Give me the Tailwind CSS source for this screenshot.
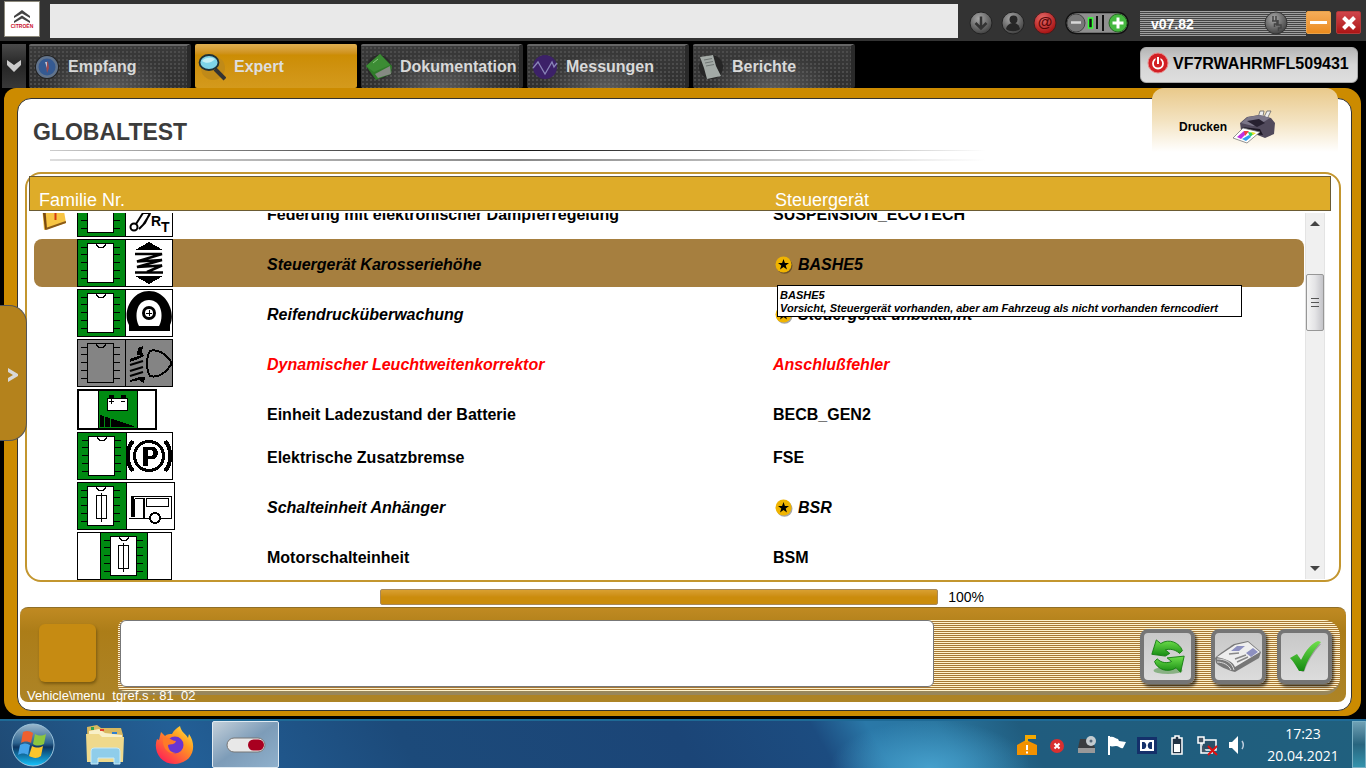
<!DOCTYPE html>
<html lang="de">
<head>
  <meta charset="UTF-8" />
  <meta name="viewport" content="width=device-width, initial-scale=1.0"/>
  <title>Globaltest</title>
  <script src="https://cdn.jsdelivr.net/npm/@tailwindcss/browser@4"></script>
</head>
<body class="h-screen min-h-[640px] flex flex-col bg-black font-['Liberation_Sans',Arial,sans-serif] text-black overflow-hidden">

  <!-- Shared drawings -->
  <svg class="absolute w-0 h-0" aria-hidden="true">
    <symbol id="chip" viewBox="0 0 48 48">
      <path d="M4 8.500H11M4 15.500H11M4 23.500H11M4 31.500H11M4 39.500H11M37 8.500H43M37 15.500H43M37 23.500H43M37 31.500H43M37 39.500H43" stroke="#000" fill="none"/>
      <rect x="10.500" y="4.500" width="26" height="39" stroke="#000"/>
      <path d="M19.500 4.500C19.500 10 28.500 10 28.500 4.500" fill="none" stroke="#000"/>
    </symbol>
    <symbol id="fuse" viewBox="0 0 48 48">
      <path d="M19.500 13.500H29.500V36.500H19.500ZM24.500 11V40" fill="none" stroke="#000"/>
    </symbol>
    <symbol id="star" viewBox="0 0 18 18">
      <circle cx="9.500" cy="9.800" r="8" fill="#000" opacity=".35"/>
      <circle cx="8.500" cy="8.500" r="8" fill="#f0b400"/>
      <path d="M8.500 3 9.900 7H14L10.700 9.400 12 13.400 8.500 11 5 13.400 6.300 9.400 3 7H7.100Z" fill="#000"/>
    </symbol>
    <radialGradient id="knob" cx=".4" cy=".3" r=".7"><stop offset="0" stop-color="#a8a8a8"/><stop offset="1" stop-color="#444"/></radialGradient>
    <radialGradient id="redKnob" cx=".4" cy=".3" r=".7"><stop offset="0" stop-color="#e86a6a"/><stop offset="1" stop-color="#a51010"/></radialGradient>
    <linearGradient id="leaf" x1="0" y1="0" x2="0" y2="1"><stop offset="0" stop-color="#6fe04c"/><stop offset="1" stop-color="#158a12"/></linearGradient>
  </svg>

  <!-- Top bar -->
  <header class="h-[41px] shrink-0 bg-[#333] flex items-center pl-1 pr-[5px]">
    <svg class="w-9 h-9 shrink-0 -mt-1" viewBox="0 0 36 36">
      <rect x=".5" y=".5" width="35" height="35" fill="#fff" stroke="#8d8a7c"/>
      <path d="M10 15 18 9 26 15V17L18 12.500 10 17ZM10 20 18 14.500 26 20V22L18 17.500 10 22Z" fill="#444"/>
      <text x="18" y="27" font-size="5" font-weight="bold" fill="#c8102e" text-anchor="middle">CITROËN</text>
    </svg>
    <input type="text" aria-label="Meldung" class="ml-[10px] h-[34px] flex-1 min-w-0 bg-[#e9e9e9] outline-none px-2" />
    <div class="flex items-center ml-[11px] pt-1 gap-2">
      <button type="button" aria-label="Download"><svg class="w-6 h-6" viewBox="0 0 24 24"><circle cx="12" cy="12" r="11" fill="url(#knob)" stroke="#222"/><path d="M12 5.500V17M6.500 12 12 17.500 17.500 12" stroke="#333" stroke-width="2.500" fill="none"/></svg></button>
      <button type="button" aria-label="Benutzer"><svg class="w-6 h-6" viewBox="0 0 24 24"><circle cx="12" cy="12" r="11" fill="url(#knob)" stroke="#222"/><circle cx="12.500" cy="8.500" r="4" fill="#262626"/><path d="M5 18C6 13 10 12 12.500 12S18 13 19 18C16 21 8 21 5 18Z" fill="#262626"/></svg></button>
      <button type="button" aria-label="E-Mail"><svg class="w-6 h-6" viewBox="0 0 24 24"><circle cx="12" cy="12" r="11" fill="url(#redKnob)" stroke="#3a2020"/><text x="12" y="16" font-size="15" text-anchor="middle" fill="#5a0707" font-weight="bold">@</text></svg></button>
      <button type="button" aria-label="Zoom"><svg class="w-16 h-6" viewBox="0 0 64 24">
        <rect x="1" y="1.500" width="62" height="21" rx="10.500" fill="#8f8f8f" stroke="#111" stroke-width="1.500"/>
        <circle cx="11" cy="12" r="9" fill="#777" stroke="#444"/><path d="M6 11.500H16" stroke="#d8d8d8" stroke-width="2.500"/>
        <rect x="23.500" y="7" width="4" height="10" fill="#111" stroke="#3f3" stroke-width="1.500"/>
        <path d="M32 5V18M38 4V20" stroke="#111" stroke-width="2"/>
        <circle cx="53" cy="12" r="9" fill="#45b83f" stroke="#2a6e26"/><path d="M53 6.500V17.500M47.500 12H58.500" stroke="#fff" stroke-width="3"/>
      </svg></button>
    </div>
    <div class="ml-[11px] mt-[5px] h-[25px] w-[166px] flex items-center justify-between pl-[11px] pr-[18px] bg-[repeating-linear-gradient(#a0a0a0_0_1px,#444_1px_2px)] text-white text-[14px] font-bold">
      <span class="pt-[2px]">v07.82</span>
      <svg class="w-6 h-6" viewBox="0 0 24 24"><circle cx="12" cy="12" r="11" fill="url(#knob)" stroke="#333"/><path d="M9 5V10M12 5V10M8 10H13V13H10.500V16M14 9V14M12 14H17V17H14.500V20" stroke="#444" stroke-width="1.500" fill="none"/></svg>
    </div>
    <button type="button" aria-label="Minimieren" class="mt-1 w-[25px] h-[23px] rounded-xs border border-[#e9a24a] bg-linear-to-b from-[#f4ac58] to-[#ec8c1c] flex items-center justify-center"><span class="w-[17px] h-[3px] bg-white"></span></button>
    <button type="button" aria-label="Schließen" class="mt-1 ml-[5px] w-[25px] h-[23px] rounded-xs border border-[#b03a3a] bg-linear-to-b from-[#d0444a] to-[#ad1414] flex items-center justify-center">
      <svg class="w-4 h-4" viewBox="0 0 16 16"><path d="M2.500 2.500 13.500 13.500M13.500 2.500 2.500 13.500" stroke="#fff" stroke-width="4"/></svg>
    </button>
  </header>

  <!-- Tabs -->
  <nav class="h-[47px] shrink-0 flex items-end pl-[2px] pr-2">
    <button type="button" aria-label="Menü" class="w-6 h-[44px] bg-linear-to-b from-[#4a4a4a] via-[#262626] to-[#383838] flex items-center justify-center">
      <svg class="w-4 h-4" viewBox="0 0 16 16"><path d="M1 2 8 7 15 2V7L8 14 1 7Z" fill="#ccc"/></svg>
    </button>
    <div class="flex items-end gap-1 ml-[3px]">
      <a href="#" class="w-[162px] h-[44px] flex items-center gap-2 pl-[5px] border-t-2 border-t-[#666] border-r-4 border-r-[#2a2a2a] rounded-xs bg-[radial-gradient(ellipse_at_50%_110%,#8888_0,#3330_60%),radial-gradient(#4c4c4c_25%,#3330_27%),linear-gradient(#3a3a3a,#303030)] bg-[size:100%_100%,4px_4px,100%_100%] text-[#d9d9d9] font-bold text-base">
        <svg class="w-[26px] h-[26px] shrink-0" viewBox="0 0 26 26"><circle cx="13" cy="13" r="12" fill="#222"/><circle cx="13" cy="13" r="11" fill="#62748c"/><circle cx="13" cy="13" r="8.500" fill="#355a92"/><path d="M11.500 8 14 7.500 15 14 13 19Z" fill="#9c4a50"/><path d="M11 8 13 8 13 14Z" fill="#b9c4d8"/></svg>
        Empfang
      </a>
      <a href="#" aria-current="page" class="w-[162px] h-[44px] flex items-center gap-2 pl-[3px] pt-[2px] rounded-xs bg-linear-to-b from-[#e0b050] via-[#cc8d04] via-25% to-[#d49a1c] text-[#dedede] font-bold text-base">
        <svg class="w-7 h-7 shrink-0" viewBox="0 0 28 28"><circle cx="15" cy="15" r="12" fill="#c08a18"/><path d="M17 16 27 26" stroke="#333" stroke-width="4"/><ellipse cx="11" cy="9.500" rx="9.500" ry="7.500" fill="#7fd4e8" stroke="#1f3138" stroke-width="1.800"/><path d="M4 8C7 4 13 4 17 6 14 10 8 11 4 8Z" fill="#c6f0f5"/></svg>
        Expert
      </a>
      <a href="#" class="w-[162px] h-[44px] flex items-center gap-2 pl-[5px] border-t-2 border-t-[#666] border-r-4 border-r-[#2a2a2a] rounded-xs bg-[radial-gradient(ellipse_at_50%_110%,#8888_0,#3330_60%),radial-gradient(#4c4c4c_25%,#3330_27%),linear-gradient(#3a3a3a,#303030)] bg-[size:100%_100%,4px_4px,100%_100%] text-[#d9d9d9] font-bold text-base">
        <svg class="w-[26px] h-[26px] shrink-0" viewBox="0 0 26 26"><circle cx="13" cy="13" r="12" fill="#2a2a2a"/><path d="M0 12 14 0 26 12 25 20 10 26Z" fill="#2f7a2a"/><path d="M9 20 24 12 25 20 12 24Z" fill="#858a82"/><path d="M0 12 14 0 24 11 8 18Z" fill="#3c8c34"/><path d="M7 9 12 5" stroke="#8ac880"/></svg>
        Dokumentation
      </a>
      <a href="#" class="w-[162px] h-[44px] flex items-center gap-2 pl-[5px] border-t-2 border-t-[#666] border-r-4 border-r-[#2a2a2a] rounded-xs bg-[radial-gradient(ellipse_at_50%_110%,#8888_0,#3330_60%),radial-gradient(#4c4c4c_25%,#3330_27%),linear-gradient(#3a3a3a,#303030)] bg-[size:100%_100%,4px_4px,100%_100%] text-[#d9d9d9] font-bold text-base">
        <svg class="w-[26px] h-[26px] shrink-0" viewBox="0 0 26 26"><circle cx="13" cy="13" r="12" fill="#3c2168"/><path d="M1 14 6 8 13 20 20 8 22 13 25 9" fill="none" stroke="#8a86b8" stroke-width="1.300"/></svg>
        Messungen
      </a>
      <a href="#" class="w-[162px] h-[44px] flex items-center gap-2 pl-[5px] border-t-2 border-t-[#666] border-r-4 border-r-[#2a2a2a] rounded-xs bg-[radial-gradient(ellipse_at_50%_110%,#8888_0,#3330_60%),radial-gradient(#4c4c4c_25%,#3330_27%),linear-gradient(#3a3a3a,#303030)] bg-[size:100%_100%,4px_4px,100%_100%] text-[#d9d9d9] font-bold text-base">
        <svg class="w-[26px] h-[26px] shrink-0" viewBox="0 0 26 26"><circle cx="13" cy="13" r="12" fill="#262626"/><path d="M2 3 15 1 18 12 23 22 9 25 6 14Z" fill="#a3aaa6"/><path d="M6 6 14 4.500M7 9 15 7.500M8 12 16 10.500" stroke="#6f7674"/></svg>
        Berichte
      </a>
    </div>
    <div class="ml-auto mb-[5px] h-9 w-[218px] rounded-md bg-linear-to-b from-[#b5b5b5] via-[#d6d6d6] to-[#dedede] border border-[#aaa] flex items-start gap-1 pl-[6px] pt-1 font-bold text-base leading-6">
      <svg class="w-[22px] h-[22px] shrink-0" viewBox="0 0 22 22"><circle cx="11" cy="11" r="10" fill="#d21f24" stroke="#e98a8a"/><circle cx="11" cy="11.500" r="5" fill="none" stroke="#fff" stroke-width="1.800"/><path d="M11 5V12" stroke="#d21f24" stroke-width="5"/><path d="M11 5V12" stroke="#fff" stroke-width="2"/></svg>
      VF7RWAHRMFL509431
    </div>
  </nav>

  <!-- Orange frame -->
  <main class="relative flex-1 min-h-0 ml-1 mr-[5px] mb-[3px] pt-[10px] pl-[13px] pr-[9px] pb-[5px] rounded-2xl rounded-tl-xl bg-[#cc8b00] flex flex-col">
    <button type="button" class="absolute top-0 right-[23px] w-[186px] h-16 rounded-t-xl bg-linear-to-b from-[#e9c98a] via-[#f3e2bf] to-white flex items-center pl-[27px] gap-[6px] pt-[14px] text-xs font-bold">
      Drucken
      <svg class="w-[43px] h-9" viewBox="0 0 43 36">
        <path d="M27 2H31L29 12H24ZM34 2H38L33 12H29Z" fill="#eee" stroke="#666" stroke-width=".8"/>
        <path d="M7 14 14 8 26 6 38 9 42 14 41 25 32 29 22 25 8 21Z" fill="#514a5c"/>
        <path d="M8 14 15 8 27 6 37 9 29 14 20 17Z" fill="#7c7789"/>
        <path d="M14 12 26 10 32 14 24 18Z" fill="#272130"/>
        <path d="M9 18 27 20 30 26 20 25Z" fill="#1d1824"/>
        <path d="M0 29 10 19 27 23 14 34Z" fill="#fff" stroke="#777" stroke-width=".8"/>
        <path d="M4 28 11 22 15 23 8 30Z" fill="#c030e0"/><path d="M11 22 16 22 12 27Z" fill="#f04040"/><path d="M15 23 22 24 17 28Z" fill="#30d060"/><path d="M9 30 16 26 18 28 13 32Z" fill="#30a0f0"/><path d="M18 23 23 24 20 26Z" fill="#f0e020"/>
      </svg>
    </button>

    <div class="flex-1 min-h-0 flex flex-col bg-white border border-[#333] rounded-[14px]">
      <div class="h-[73px] shrink-0 pl-[15px] pt-[19px]">
        <h1 class="text-[23px] leading-7 font-bold text-[#3c3c3c]">GLOBALTEST</h1>
        <div class="ml-[17px] mt-1 w-[71%] flex flex-col gap-2">
          <div class="h-px bg-linear-to-r from-[#ccc] via-[#111] to-white"></div>
          <div class="h-[2px] bg-linear-to-r from-[#ddd] via-[#888] to-white"></div>
        </div>
      </div>

      <!-- ECU table -->
      <section class="relative flex-1 min-h-0 ml-[7px] mr-[10px] border-2 border-[#c3962f] rounded-2xl pt-[2px] pl-[2px] pr-2">
        <table class="h-full flex flex-col">
          <thead class="block h-[35px] shrink-0 border border-[#6b5b33] bg-[#deac29] text-white">
            <tr class="grid grid-cols-[1fr_555px] pl-[9px] pt-[13px] text-[18px] leading-5">
              <th class="font-normal text-left">Familie Nr.</th>
              <th class="font-normal text-left">Steuergerät</th>
            </tr>
          </thead>
          <tbody class="flex-1 min-h-0 mt-[2px] ml-[5px] mr-[27px] overflow-hidden flex flex-col justify-end gap-[2px] font-bold text-base leading-[18px]">
            <tr class="shrink-0 grid grid-cols-[43px_190px_1fr_531px]">
              <td>
                <svg class="w-8 h-12" viewBox="0 0 32 48"><path d="M8 16 28 10 32 34 10 41Z" fill="#f7c544"/><path d="M8 16 11 41 13 40 11 15Z" fill="#7a4a10"/><path d="M12 40 32 33" stroke="#8a5a18" stroke-width="2"/><path d="M21.500 22V31" stroke="#d23a10" stroke-width="2"/></svg>
              </td>
              <td>
                <svg class="w-24 h-12" viewBox="0 0 96 48" shape-rendering="crispEdges">
                  <rect x=".5" y=".5" width="95" height="47" fill="#fff" stroke="#000"/><rect x="1" y="1" width="48" height="46" fill="#008a12"/><path d="M48.500 0V48" stroke="#000"/>
                  <use href="#chip" width="48" height="48" fill="#fff"/>
                  <g shape-rendering="auto" fill="none" stroke="#000" stroke-width="2"><circle cx="57" cy="38" r="3.500"/><path d="M59 35 66 24H73L68 34 62 40M72 24 78 20M66 36 73 25"/></g>
                  <text x="74" y="37" font-size="14">R</text><text x="84" y="43" font-size="14">T</text>
                </svg>
              </td>
              <td class="pt-[17px]">Federung mit elektronischer Dämpferregelung</td>
              <td class="pt-[17px]">SUSPENSION_ECOTECH</td>
            </tr>
            <tr class="shrink-0 grid grid-cols-[43px_190px_1fr_531px] rounded-lg bg-[#a67f3f] italic">
              <td></td>
              <td>
                <svg class="w-24 h-12" viewBox="0 0 96 48" shape-rendering="crispEdges">
                  <rect x=".5" y=".5" width="95" height="47" fill="#fff" stroke="#000"/><rect x="1" y="1" width="48" height="46" fill="#008a12"/><path d="M48.500 0V48" stroke="#000"/>
                  <use href="#chip" width="48" height="48" fill="#fff"/>
                  <path d="M58 11 72 3 86 11ZM58 37 72 45 86 37Z"/>
                  <path d="M58 15H85L60 22.500 85 21 60 28 85 26.500 70 33M58 33.500H86" fill="none" stroke="#000" stroke-width="2.500" stroke-linejoin="bevel" shape-rendering="auto"/>
                </svg>
              </td>
              <td class="pt-[17px]">Steuergerät Karosseriehöhe</td>
              <td class="pt-[17px] flex gap-[5px] pl-[2px]"><svg class="w-[18px] h-[18px] shrink-0" viewBox="0 0 18 18"><use href="#star"/></svg><span>BASHE5</span></td>
            </tr>
            <tr class="relative shrink-0 grid grid-cols-[43px_190px_1fr_531px] italic">
              <td></td>
              <td>
                <svg class="w-24 h-12" viewBox="0 0 96 48" shape-rendering="crispEdges">
                  <rect x=".5" y=".5" width="95" height="47" fill="#fff" stroke="#000"/><rect x="1" y="1" width="48" height="46" fill="#008a12"/><path d="M48.500 0V48" stroke="#000"/>
                  <use href="#chip" width="48" height="48" fill="#fff"/>
                  <path d="M52 42V36C45 24 54 2 72 2S99 24 93 36V42Z" shape-rendering="auto"/>
                  <path d="M62 37C57 28 59 11 72 11S87 28 82 37Z" fill="#fff" shape-rendering="auto"/>
                  <circle cx="72" cy="24" r="5.500" fill="none" stroke="#000" stroke-width="3" shape-rendering="auto"/><path d="M69 24H75M72 21V27" stroke="#000"/>
                </svg>
              </td>
              <td class="pt-[17px]">Reifendrucküberwachung</td>
              <td class="relative pt-[17px] flex gap-[5px] pl-[2px]">
                <svg class="w-[18px] h-[18px] shrink-0" viewBox="0 0 18 18"><use href="#star"/></svg><span>Steuergerät unbekannt</span>
                <div role="tooltip" class="absolute left-1 -top-1 z-10 h-8 w-[465px] border border-black bg-white pl-[2px] pt-[3px] text-[11px] leading-[13px] whitespace-nowrap">BASHE5<br>Vorsicht, Steuergerät vorhanden, aber am Fahrzeug als nicht vorhanden ferncodiert</div>
              </td>
            </tr>
            <tr class="shrink-0 grid grid-cols-[43px_190px_1fr_531px] italic text-[#f00]">
              <td></td>
              <td>
                <svg class="w-24 h-12" viewBox="0 0 96 48" shape-rendering="crispEdges">
                  <rect x=".5" y=".5" width="95" height="47" fill="#848484" stroke="#000"/><path d="M48.500 0V48" stroke="#000"/>
                  <use href="#chip" width="48" height="48" fill="#848484"/>
                  <path d="M73 12C79 10 88 13 95 24C88 36 79 39 73 37C69 30 69 19 73 12Z" fill="none" stroke="#000" stroke-width="2"/>
                  <path d="M53 26 66 22M53 32 66 28M53 37 66 33" stroke="#000" stroke-width="2" shape-rendering="auto"/>
                  <path d="M53 20 64 16 67 17 61 20 53 23ZM60 16 61 9 66 7 65 13 67 17ZM53 41 62 38 68 38 67 44 62 41 53 43Z"/>
                </svg>
              </td>
              <td class="pt-[17px]">Dynamischer Leuchtweitenkorrektor</td>
              <td class="pt-[17px]">Anschlußfehler</td>
            </tr>
            <tr class="shrink-0 grid grid-cols-[43px_190px_1fr_531px]">
              <td></td>
              <td>
                <svg class="w-20 h-[41px]" viewBox="0 0 80 41" shape-rendering="crispEdges">
                  <rect x="1" y="1" width="78" height="39" fill="#fff" stroke="#000" stroke-width="2"/><rect x="21" y="2" width="39" height="37" fill="#008a12"/><path d="M21.500 1V40M60.500 1V40" stroke="#000"/>
                  <rect x="30.500" y="9" width="20" height="12" fill="#fff" stroke="#000"/><path d="M32 6H37V9H32ZM44 6H49V9H44Z"/><path d="M32 12.500H37M34.500 10V15M44 12.500H48" stroke="#000"/>
                  <path d="M23 26 57 37V38H23Z"/><path d="M27.500 26V38M33.500 28V38" stroke="#008a12"/>
                </svg>
              </td>
              <td class="pt-[17px]">Einheit Ladezustand der Batterie</td>
              <td class="pt-[17px]">BECB_GEN2</td>
            </tr>
            <tr class="shrink-0 grid grid-cols-[43px_190px_1fr_531px]">
              <td></td>
              <td>
                <svg class="w-24 h-12" viewBox="0 0 96 48" shape-rendering="crispEdges">
                  <rect x=".5" y=".5" width="95" height="47" fill="#fff" stroke="#000"/><rect x="1" y="1" width="48" height="46" fill="#008a12"/><path d="M49.500 0V48" stroke="#000"/>
                  <use href="#chip" x="1" width="48" height="48" fill="#fff"/>
                  <circle cx="72" cy="24" r="14.500" fill="none" stroke="#000" stroke-width="3"/>
                  <path d="M56 9C49 17 49 31 56 39M88 9C95 17 95 31 88 39" fill="none" stroke="#000" stroke-width="4"/>
                  <path d="M66 15H75C83 15 83 27 75 27H71V34H66ZM71 18V24H74C77 24 77 18 74 18Z" fill-rule="evenodd"/>
                </svg>
              </td>
              <td class="pt-[17px]">Elektrische Zusatzbremse</td>
              <td class="pt-[17px]">FSE</td>
            </tr>
            <tr class="shrink-0 grid grid-cols-[43px_190px_1fr_531px] italic">
              <td></td>
              <td>
                <svg class="w-[98px] h-12" viewBox="0 0 98 48" shape-rendering="crispEdges">
                  <rect x=".5" y=".5" width="97" height="47" fill="#fff" stroke="#000"/><rect x="1" y="1" width="48" height="46" fill="#008a12"/><path d="M49.500 0V48" stroke="#000"/>
                  <use href="#chip" width="48" height="48" fill="#fff"/><use href="#fuse" width="48" height="48"/>
                  <path d="M54.500 35V14.500H94.500V36H52M57.500 35V17M67.500 16V36M58 16.500H68M69.500 16.500H91.500V24.500H69.500Z" fill="none" stroke="#000"/>
                  <path d="M55.500 15V35M67 16V36" stroke="#000" stroke-width="2"/>
                  <circle cx="78" cy="36" r="5" fill="#fff" stroke="#000" stroke-width="2"/>
                </svg>
              </td>
              <td class="pt-[17px]">Schalteinheit Anhänger</td>
              <td class="pt-[17px] flex gap-[5px] pl-[2px]"><svg class="w-[18px] h-[18px] shrink-0" viewBox="0 0 18 18"><use href="#star"/></svg><span>BSR</span></td>
            </tr>
            <tr class="shrink-0 grid grid-cols-[43px_190px_1fr_531px]">
              <td></td>
              <td>
                <svg class="w-[95px] h-12" viewBox="0 0 95 48" shape-rendering="crispEdges">
                  <rect x=".5" y=".5" width="94" height="47" fill="#fff" stroke="#000"/><rect x="23" y="1" width="48" height="46" fill="#008a12"/><path d="M23.500 0V48M70.500 0V48" stroke="#000"/>
                  <use href="#chip" x="23" width="48" height="48" fill="#fff"/><use href="#fuse" x="22" width="48" height="48"/>
                </svg>
              </td>
              <td class="pt-[17px]">Motorschalteinheit</td>
              <td class="pt-[17px]">BSM</td>
            </tr>
          </tbody>
        </table>
        <div class="absolute right-[14px] top-[39px] bottom-[1px] w-5 bg-[#f0f0f0] border-x border-[#e4e4e4] flex flex-col items-center pt-2 pb-2">
          <svg class="w-[10px] h-[5px] shrink-0" viewBox="0 0 10 5"><path d="M0 5 5 0 10 5Z" fill="#444"/></svg>
          <div class="mt-12 h-[57px] w-[18px] shrink-0 rounded-xs border border-[#979797] bg-linear-to-r from-[#f5f5f5] via-[#e4e4e6] to-[#c4c4c9] flex flex-col items-center justify-center gap-[3px]">
            <span class="w-2 h-px bg-[#555]"></span><span class="w-2 h-px bg-[#555]"></span><span class="w-2 h-px bg-[#555]"></span>
          </div>
          <svg class="w-[10px] h-[5px] mt-auto shrink-0" viewBox="0 0 10 5"><path d="M0 0 5 5 10 0Z" fill="#444"/></svg>
        </div>
      </section>

      <!-- Progress -->
      <div class="h-[25px] shrink-0 flex items-center pl-[362px] pt-1 pr-[367px] gap-[10px] text-sm">
        <div role="progressbar" aria-label="Fortschritt" aria-valuenow="100" class="flex-1 h-4 rounded-xs border border-[#a8895a] bg-linear-to-b from-[#d9a030] via-[#cb8c0c] to-[#cb8c0c]"></div>
        <span>100%</span>
      </div>

      <!-- Command bar -->
      <footer class="relative h-[95px] shrink-0 ml-[2px] mr-[5px] mb-2 rounded-lg overflow-hidden border-t border-[#8f6f28] bg-linear-to-b from-[#c08a22] via-[#ac7d18] via-25% to-[#ad8426] flex items-start">
        <div class="ml-[19px] mt-4 w-[57px] h-[58px] shrink-0 rounded-md bg-[#c68b12] shadow-[1px_2px_3px_#7a5a10]"></div>
        <div class="ml-[22px] mr-[6px] mt-3 flex-1 h-[75px] rounded-lg rounded-r-2xl border-b-4 border-[#98875c] bg-[repeating-linear-gradient(#fff3cc_0_1px,#a87834_1px_2px)] flex items-start">
          <textarea aria-label="Ausgabe" class="ml-[2px] w-[814px] h-[67px] resize-none rounded-md border border-[#777] bg-white outline-none"></textarea>
          <div class="ml-auto mr-2 mt-[9px] flex">
            <button type="button" aria-label="Aktualisieren" class="w-[55px] h-[55px] rounded-lg border-4 border-[#757575] bg-linear-to-b from-[#c8c8c8] to-[#dcdcdc] shadow-[2px_3px_3px_#0009] flex items-center justify-center">
              <svg class="w-9 h-9" viewBox="0 0 40 40"><ellipse cx="20" cy="35" rx="16" ry="4" fill="#3a8a30" opacity=".5"/><path d="M2 17 7 1 12 5C21-1 33 4 36 13L33 16C27 11 22 11 17 12L22 16 17 19Z" fill="url(#leaf)" stroke="#137a10"/><path d="M38 19 34 37 29 32C20 38 8 34 5 25L8 22C13 27 19 27 24 25L19 21Z" fill="url(#leaf)" stroke="#137a10"/></svg>
            </button>
            <button type="button" aria-label="Journal" class="ml-4 w-[55px] h-[55px] rounded-lg border-4 border-[#757575] bg-linear-to-b from-[#c8c8c8] to-[#dcdcdc] shadow-[2px_3px_3px_#0009] flex items-center justify-center">
              <svg class="w-[47px] h-8 shrink-0" viewBox="0 0 47 32"><path d="M0 17C4 13 14 6 19 3L33 0 46 11 44 17 20 31C12 29 4 25 1 22Z" fill="#777"/><path d="M2 16 20 4 33 1 45 11 20 26C18 20 10 18 2 16Z" fill="#eee"/><path d="M2 18C10 18 17 21 19 29M2 21C8 21 14 24 16 29" stroke="#ddd" fill="none"/><path d="M16 10 22 5 30 5 24 10ZM31 12 38 7 43 11 36 16Z" fill="#8d90c0"/><path d="M14 13 24 12M20 18 31 14M22 21 33 16" stroke="#888" stroke-width="1.500"/></svg>
            </button>
            <button type="button" aria-label="Bestätigen" class="ml-[11px] w-[55px] h-[55px] rounded-lg border-4 border-[#757575] bg-linear-to-b from-[#c8c8c8] to-[#dcdcdc] shadow-[2px_3px_3px_#0009] flex items-center justify-center">
              <svg class="w-8 h-8" viewBox="0 0 32 32"><path d="M2 18 8 15 12 21C17 11 23 4 31 1 23 9 17 19 13 30H11Z" fill="#555" opacity=".4" transform="translate(2 1)"/><path d="M1 17 8 13 12 19C17 9 23 2 29 0L32 1C25 9 18 19 15 30H10C7 25 5 21 1 17Z" fill="url(#leaf)"/></svg>
            </button>
          </div>
        </div>
        <p class="absolute left-[7px] top-20 text-[13px] leading-4 text-white">Vehicle\menu_tgref.s : 81_02</p>
      </footer>
    </div>
  </main>

  <!-- Side drawer handle -->
  <button type="button" aria-label="Seitenleiste öffnen" class="absolute left-0 top-[305px] w-[27px] h-[136px] rounded-r-[18px] border border-l-0 border-[#555] bg-[#b4821c] flex items-center justify-center pt-1">
    <svg class="w-[10px] h-[14px]" viewBox="0 0 10 14"><path d="M0 0 10 6V8L0 14V10L5 7 0 4Z" fill="#d8d8d8"/></svg>
  </button>

  <!-- Taskbar -->
  <div class="h-[49px] shrink-0 border-t-2 border-[#1e6a96] bg-[radial-gradient(ellipse_100px_48px_at_930px_100%,#46a0cc_0,#46a0cc00_100%),linear-gradient(60deg,#1f4a74_0,#235f96_14%,#1c4a7a_30%,#1b4577_50%,#1c4c80_60%,#2a78a8_64%,#2a76a0_69%,#205c7e_75%,#20607e_100%)] flex items-center text-white">
    <button type="button" aria-label="Start" class="ml-[10px]"><svg class="w-[46px] h-[46px]" viewBox="0 0 46 46">
      <defs><linearGradient id="orb" x1="0" y1="0" x2="0" y2="1"><stop offset="0" stop-color="#9db8cc"/><stop offset=".45" stop-color="#2d6490"/><stop offset=".55" stop-color="#0d3560"/><stop offset="1" stop-color="#16c5ff"/></linearGradient></defs>
      <circle cx="23" cy="23" r="21" fill="url(#orb)" stroke="#9cc4dc"/>
      <path d="M13 10C17 8 20 9 23 11L21 21C18 19 14 19 11 21Z" fill="#ef6030"/><path d="M25 12C29 14 32 14 36 12L34 22C30 24 26 24 23 22Z" fill="#8cc63f"/><path d="M10 23C14 21 17 21 20 23L18 33C15 31 11 31 8 33Z" fill="#45a4ea"/><path d="M22 24C26 26 29 26 33 24L31 34C27 37 23 36 19 34Z" fill="#fbc52c"/>
    </svg></button>
    <button type="button" aria-label="Explorer" class="ml-[29px]"><svg class="w-10 h-10" viewBox="0 0 40 40"><path d="M2 2 12 0 16 3H36L38 10V36H3Z" fill="#d9b860"/><path d="M4 6 14 4 20 8 37 10V35H4Z" fill="#f8f0c8"/><path d="M1 9H14L17 12H39L38 37H2Z" fill="#efd98c"/><rect x="6" y="2" width="3" height="3" fill="#30a050"/><rect x="15" y="4" width="4" height="2" fill="#e04030"/><rect x="27" y="7" width="5" height="2" fill="#3080d0"/><path d="M6 39V26Q6 23 9 23H32Q35 23 35 26V39H29V33H13V39Z" fill="#8fcdea" stroke="#c7eaf8"/></svg></button>
    <button type="button" aria-label="Firefox" class="ml-[30px]"><svg class="w-10 h-10" viewBox="0 0 40 40">
      <defs><linearGradient id="fox" x1="1" y1="0" x2=".2" y2="1"><stop offset="0" stop-color="#fff04a"/><stop offset=".4" stop-color="#ff9a20"/><stop offset="1" stop-color="#ff1c58"/></linearGradient></defs>
      <path d="M6 7 10 11C12 9 15 9 17 9C19 5 22 3 25 1C26 7 31 9 33 13L34 9C42 20 39 38 20 39C4 39-2 24 2 14L4 15Z" fill="url(#fox)"/><circle cx="20" cy="20" r="8.500" fill="#6a35d0"/><path d="M8 13C14 11 16 16 21 16C20 20 15 19 13 20C13 25 17 28 21 28C13 30 7 23 8 13Z" fill="#ff7a28"/></svg></button>
    <button type="button" aria-label="Diagnose" class="ml-[17px] w-[67px] h-[47px] rounded-xs border border-[#dfeaf2] bg-linear-to-br from-[#c4d0da] via-[#7d9cb8] to-[#8fb0cc] flex items-center justify-center"><svg class="w-10 h-4" viewBox="0 0 40 16"><rect x="1" y="1" width="38" height="14" rx="7" fill="#e8e8e8" stroke="#777"/><rect x="22" y="2.500" width="16" height="11" rx="5.500" fill="#a80020"/></svg></button>

    <div class="ml-auto flex items-center gap-2">
      <svg class="w-[22px] h-[22px]" viewBox="0 0 22 22"><path d="M1 11 10 6 21 11V21H1Z" fill="#f29100"/><path d="M9 8V1H20V5H12V8Z" fill="#f5a800"/><path d="M11 11V16M11 17.500V19.500" stroke="#fff" stroke-width="2"/></svg>
      <svg class="w-[22px] h-[22px]" viewBox="0 0 22 22"><circle cx="11" cy="12" r="7" fill="#d93030"/><path d="M8.500 9.500 13.500 14.500M13.500 9.500 8.500 14.500" stroke="#fff" stroke-width="2"/></svg>
      <svg class="w-[22px] h-[22px]" viewBox="0 0 22 22"><path d="M4 5H16L19 14H2Z" fill="#3a3d40"/><path d="M2 14H19V19H2Z" fill="#999"/><circle cx="15" cy="7" r="5" fill="#c4ccd0"/><circle cx="15" cy="7" r="1.500" fill="#567"/></svg>
      <svg class="w-[22px] h-[22px]" viewBox="0 0 22 22"><path d="M3 2V21" stroke="#fff" stroke-width="2"/><path d="M4 3C8 2 9 5 12 5L13 7 20 8 17 14C14 15 13 12 10 12 8 12 6 13 4 12Z" fill="#fff"/></svg>
      <svg class="w-[22px] h-[22px]" viewBox="0 0 22 22"><rect x="1" y="3" width="20" height="17" fill="#14306a"/><rect x="4" y="6" width="14" height="11" fill="#fff"/><path d="M6 8H8C11 9 11 14 8 15H6ZM16 8H14C11 9 11 14 14 15H16Z" fill="#14306a"/></svg>
      <svg class="w-[22px] h-[22px]" viewBox="0 0 22 22"><path d="M9 2H13V4H16V20H6V4H9Z" fill="#234" stroke="#fff" stroke-width="1.500"/><path d="M8 10H14V18H8Z" fill="#fff"/></svg>
      <svg class="w-[22px] h-[22px]" viewBox="0 0 22 22"><rect x="6" y="6" width="14" height="10" fill="#2a5068" stroke="#fff" stroke-width="1.500"/><path d="M2 3H8V9H2ZM5 9V19H11M9 19H17" fill="#456" stroke="#fff" stroke-width="1.500"/><path d="M12 12 21 21M21 12 12 21" stroke="#e01010" stroke-width="2"/></svg>
      <svg class="w-[22px] h-[22px]" viewBox="0 0 22 22"><path d="M3 8H6L12 2V20L6 14H3Z" fill="#fff"/><path d="M16 7C18 10 18 12 16 15" stroke="#bcd" stroke-width="1.500" fill="none"/></svg>
    </div>
    <time class="ml-[15px] w-[80px] text-center text-sm leading-[22px] font-['Open_Sans','Noto_Sans',sans-serif]">17:23<br>20.04.2021</time>
    <button type="button" aria-label="Desktop anzeigen" class="ml-[9px] w-[14px] h-full border border-[#7ab0c4] bg-linear-to-b from-[#6fa0b4] via-[#28657f] to-[#3593ac]"></button>
  </div>
</body>
</html>
